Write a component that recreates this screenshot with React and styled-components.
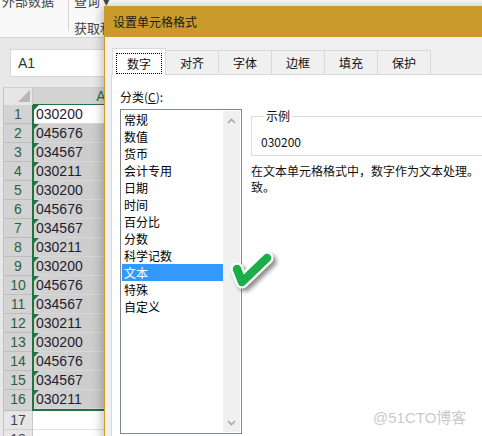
import React from 'react';
import styled, { createGlobalStyle } from 'styled-components';

const GlobalStyle = createGlobalStyle`
  html, body { margin: 0; padding: 0; }
  body {
    width: 482px;
    height: 436px;
    overflow: hidden;
    background: #fff;
    font-family: "Noto Sans CJK SC", "Liberation Sans", sans-serif;
  }
`;

const GOLD = '#CA9B2C';
const GREEN = '#217346';

const Screen = styled.div`
  position: relative;
  width: 482px;
  height: 436px;
  overflow: hidden;
`;

/* ---------- excel behind the dialog ---------- */

const Ribbon = styled.div`
  display: flex;
  height: 37px;
  background: #f9f9f9;
  border-bottom: 1px solid #d4d4d4;
  overflow: hidden;
  font-size: 13px;
  color: #444;
`;

const RibbonGroup = styled.div`
  display: flex;
  flex-direction: column;
  width: ${p => p.w}px;
  height: 31px;
  padding-left: ${p => p.pad}px;
  box-sizing: border-box;
  border-right: ${p => (p.sep ? '1px solid #d5d5d5' : 'none')};
  line-height: 16px;
`;

const RibbonTop = styled.div`
  margin-top: -7px;
  white-space: nowrap;
`;

const RibbonBottom = styled.div`
  margin-top: 11px;
  white-space: nowrap;
`;

const FormulaBar = styled.div`
  height: 49px;
  background: #e8e8e8;
  padding: 11px 0 0 10px;
  box-sizing: border-box;
`;

const NameBox = styled.div`
  width: 110px;
  height: 28px;
  background: #fff;
  border: 1px solid #d6d6d6;
  box-sizing: border-box;
  padding-left: 7px;
  font: 14px/26px "Liberation Sans", sans-serif;
  color: #333;
`;

const HeaderRow = styled.div`
  display: flex;
  height: 18px;
  background: #e8e8e8;
`;

const Gutter = styled.div`
  width: 3px;
  border-right: 1px solid #c2c2c2;
  background: #e8e8e8;
`;

const Corner = styled.div`
  position: relative;
  width: 28px;
  border-right: 1px solid #c6c6c6;
  border-top: 1px solid #d0d0d0;
  background: #e6e6e6;
  &::after {
    content: '';
    position: absolute;
    right: 2px;
    bottom: 3px;
    border-left: 12px solid transparent;
    border-bottom: 12px solid #b7b7b7;
  }
`;

const ColHeader = styled.div`
  width: 136px;
  height: 16px;
  background: #d3d3d3;
  border-top: 1px solid #d0d0d0;
  border-bottom: 2px solid ${GREEN};
  box-sizing: content-box;
  text-align: center;
  font: 14px/16px "Liberation Sans", sans-serif;
  color: ${GREEN};
`;

const Sheet = styled.div`
  display: flex;
  background: #e8e8e8;
`;

const RowHeaders = styled.div`
  display: flex;
  flex-direction: column;
`;

const RowHeader = styled.div`
  width: 28px;
  height: ${p => (p.tall ? 20 : 18)}px;
  border-bottom: 1px solid ${p => (p.sel ? '#bdbdbd' : '#d0d0d0')};
  border-right: 1px solid ${p => (p.sel ? '#bdbdbd' : '#c6c6c6')};
  background: ${p => (p.sel ? '#d3d3d3' : '#e6e6e6')};
  color: ${p => (p.sel ? '#2b5f45' : '#444')};
  font: 14px/19px "Liberation Sans", sans-serif;
  text-align: center;
`;

const CellColumn = styled.div`
  display: flex;
  flex-direction: column;
  width: 150px;
  background: #fff;
`;

const Selection = styled.div`
  border-left: 2px solid ${GREEN};
  border-bottom: 2px solid ${GREEN};
  margin-left: -1px;
`;

const Cell = styled.div`
  position: relative;
  height: 18px;
  border-bottom: 1px solid ${p => (p.sel ? '#d8d8d8' : '#e2e2e2')};
  padding-left: 2px;
  background: ${p =>
    p.active ? '#fff' : p.sel ? 'linear-gradient(to right, #d3d3d3, #c2c2c2)' : '#fff'};
  font: 14px/19px "Liberation Sans", sans-serif;
  color: #1d1d30;
  &::before {
    content: '';
    display: ${p => (p.flag ? 'block' : 'none')};
    position: absolute;
    left: 0;
    top: 0;
    border-top: 5px solid ${GREEN};
    border-right: 5px solid transparent;
  }
`;

/* ---------- format cells dialog ---------- */

const Dialog = styled.div`
  position: absolute;
  left: 104px;
  top: 6px;
  width: 400px;
  height: 440px;
  background: #f0f0f0;
  border-left: 1px solid ${GOLD};
  box-shadow: -3px 0 9px rgba(0, 0, 0, 0.22);
  font-size: 12px;
  color: #111;
`;

const TitleBar = styled.div`
  display: flex;
  align-items: center;
  height: 31px;
  padding-left: 8px;
  background: ${GOLD};
  font-size: 12px;
  color: #1a1a1a;
`;

const DialogBody = styled.div`
  padding: 10px 0 0 6px;
`;

const TabBar = styled.div`
  display: flex;
  align-items: flex-end;
  height: 27px;
  padding-left: 1px;
`;

const Tab = styled.div`
  position: relative;
  z-index: ${p => (p.active ? 1 : 0)};
  display: flex;
  justify-content: center;
  align-items: ${p => (p.active ? 'flex-start' : 'center')};
  width: 54px;
  height: ${p => (p.active ? 27 : 24)}px;
  margin-left: ${p => (p.first ? 0 : -1)}px;
  margin-bottom: ${p => (p.active ? -1 : 0)}px;
  padding-top: ${p => (p.active ? 4 : 0)}px;
  box-sizing: border-box;
  border: 1px solid #d9d9d9;
  border-bottom: none;
  background: ${p => (p.active ? '#fff' : '#f0f0f0')};
`;

const FocusLabel = styled.span`
  display: flex;
  justify-content: center;
  align-items: center;
  width: 46px;
  height: 21px;
  box-sizing: border-box;
  outline: 1px dotted #000;
  outline-offset: -1px;
`;

const Panel = styled.div`
  height: 370px;
  background: #fff;
  border: 1px solid #d9d9d9;
  padding: 14px 0 0 8px;
`;

const Label = styled.div`
  line-height: 16px;
  height: 16px;
`;

const Key = styled.span`
  text-decoration: underline;
`;

const Columns = styled.div`
  display: flex;
  gap: 9px;
  margin-top: 4px;
`;

const ListBox = styled.div`
  display: flex;
  flex: none;
  width: 122px;
  height: 325px;
  box-sizing: border-box;
  border: 1px solid #828790;
  padding: 1px;
`;

const Items = styled.div`
  flex: 1;
`;

const Item = styled.div`
  height: 17px;
  line-height: 17px;
  padding-left: 2px;
  background: ${p => (p.sel ? '#3399ff' : 'transparent')};
  color: ${p => (p.sel ? '#fff' : '#000')};
`;

const ScrollBar = styled.div`
  display: flex;
  flex-direction: column;
  justify-content: space-between;
  align-items: center;
  width: 17px;
  padding: 7px 0 6px;
  box-sizing: border-box;
  background: #f0f0f0;
`;

const RightColumn = styled.div`
  flex: 1;
`;

const GroupBox = styled.fieldset`
  margin: 0;
  padding: 11px 0 5px 9px;
  border: 1px solid #dcdcdc;
  min-width: 0;
`;

const Legend = styled.legend`
  padding: 0 2px;
  margin-left: 3px;
  line-height: 14px;
  font-size: 12px;
`;

const Sample = styled.div`
  line-height: 16px;
`;

const Description = styled.div`
  width: 229px;
  margin-top: ${p => (p.first ? 7 : 0)}px;
  line-height: 16px;
  white-space: nowrap;
  overflow: hidden;
`;

const CheckMark = styled.svg`
  position: absolute;
  left: 228px;
  top: 250px;
  filter: drop-shadow(3px 3px 2px rgba(0, 0, 0, 0.45));
`;

const Watermark = styled.div`
  position: absolute;
  left: 373px;
  top: 408px;
  font: 15px/20px "Liberation Sans", "Noto Sans CJK SC", sans-serif;
  color: #cacaca;
`;

const values = ['030200', '045676', '034567', '030211'];
const rows = Array.from({ length: 16 }, (_, i) => values[i % 4]);
const categories = ['常规', '数值', '货币', '会计专用', '日期', '时间', '百分比', '分数', '科学记数', '文本', '特殊', '自定义'];
const tabs = ['数字', '对齐', '字体', '边框', '填充', '保护'];

const Chevron = ({ up }) => (
  <svg width="9" height="6" viewBox="0 0 9 6">
    <path
      d={up ? 'M1 5 L4.5 1.5 L8 5' : 'M1 1 L4.5 4.5 L8 1'}
      fill="none"
      stroke="#a8a8a8"
      strokeWidth="1.6"
    />
  </svg>
);

export default function App() {
  return (
    <Screen>
      <GlobalStyle />
      <Ribbon>
        <RibbonGroup w={69} pad={2} sep>
          <RibbonTop>外部数据</RibbonTop>
        </RibbonGroup>
        <RibbonGroup w={36} pad={5}>
          <RibbonTop>查询 ▾</RibbonTop>
          <RibbonBottom>获取和</RibbonBottom>
        </RibbonGroup>
      </Ribbon>
      <FormulaBar>
        <NameBox>A1</NameBox>
      </FormulaBar>
      <HeaderRow>
        <Gutter />
        <Corner />
        <ColHeader>A</ColHeader>
      </HeaderRow>
      <Sheet>
        <Gutter />
        <RowHeaders>
          {rows.map((_, i) => (
            <RowHeader key={i} sel tall={i === 15}>
              {i + 1}
            </RowHeader>
          ))}
          <RowHeader>17</RowHeader>
          <RowHeader>18</RowHeader>
        </RowHeaders>
        <CellColumn>
          <Selection>
            {rows.map((v, i) => (
              <Cell key={i} sel active={i === 0} flag>
                {v}
              </Cell>
            ))}
          </Selection>
          <Cell />
          <Cell />
        </CellColumn>
      </Sheet>

      <Dialog>
        <TitleBar>设置单元格格式</TitleBar>
        <DialogBody>
          <TabBar>
            {tabs.map((t, i) => (
              <Tab key={t} active={i === 0} first={i === 0}>
                {i === 0 ? <FocusLabel>{t}</FocusLabel> : t}
              </Tab>
            ))}
          </TabBar>
          <Panel>
            <Label>
              分类(<Key>C</Key>):
            </Label>
            <Columns>
              <ListBox>
                <Items>
                  {categories.map(c => (
                    <Item key={c} sel={c === '文本'}>
                      {c}
                    </Item>
                  ))}
                </Items>
                <ScrollBar>
                  <Chevron up />
                  <Chevron />
                </ScrollBar>
              </ListBox>
              <RightColumn>
                <GroupBox>
                  <Legend>示例</Legend>
                  <Sample>030200</Sample>
                </GroupBox>
                <Description first>在文本单元格格式中，数字作为文本处理。</Description>
                <Description>致。</Description>
              </RightColumn>
            </Columns>
          </Panel>
        </DialogBody>
      </Dialog>

      <CheckMark width="52" height="46" viewBox="0 0 52 46">
        <path d="M9 19 L14 32 L39 8" fill="none" stroke="#fff" strokeWidth="13" strokeLinecap="round" strokeLinejoin="round" />
        <path d="M9 19 L14 32 L39 8" fill="none" stroke="#1bae48" strokeWidth="8.5" strokeLinecap="round" strokeLinejoin="round" />
      </CheckMark>
      <Watermark>@51CTO博客</Watermark>
    </Screen>
  );
}
